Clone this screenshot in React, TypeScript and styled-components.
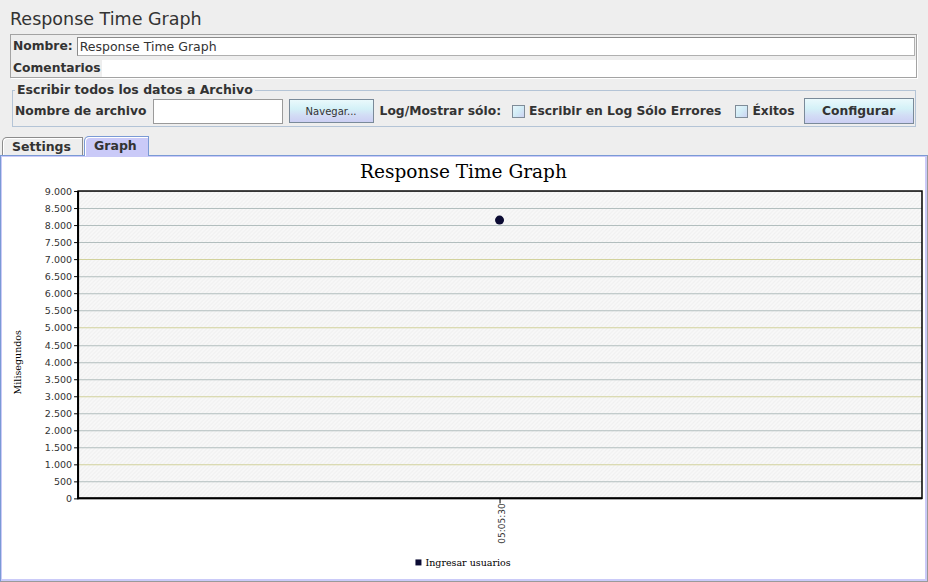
import React from "react";
import styled, { createGlobalStyle } from "styled-components";

const GlobalStyle = createGlobalStyle`
  html, body {
    margin: 0;
    padding: 0;
    background: #eeeeee;
    font-family: "DejaVu Sans", "Liberation Sans", sans-serif;
    color: #333333;
  }
`;

const Page = styled.div`
  width: 928px;
  height: 582px;
  display: flex;
  flex-direction: column;
  box-sizing: border-box;
  overflow: hidden;
`;

const Title = styled.div`
  font-size: 17.5px;
  line-height: 20px;
  padding: 9px 0 0 10px;
  color: #333333;
`;

const NamePanel = styled.div`
  margin: 5px 11px 0 10px;
  border: 1px solid #a3a3a3;
  box-shadow: 1px 1px 0 #ffffff;
  padding: 1px 0 0 1px;
`;

const NameRow = styled.div`
  display: flex;
  height: 19px;
  margin-top: 1px;
  padding-right: 1px;
`;

const BoldLabel = styled.span<{ $lh?: number }>`
  flex-shrink: 0;
  font-size: 12.3px;
  font-weight: bold;
  line-height: ${(p) => p.$lh ?? 14}px;
  white-space: nowrap;
  color: #333333;
`;

const NameLabel = styled(BoldLabel)`
  padding-left: 1px;
  margin-right: 4px;
`;

const NameInput = styled.input`
  flex: 1;
  height: 19px;
  box-sizing: border-box;
  border: 1px solid #8a8a8a;
  border-right-color: #b0b0b0;
  border-bottom-color: #b0b0b0;
  padding: 0 2px;
  margin: 0;
  font-family: "DejaVu Sans", sans-serif;
  font-size: 12.5px;
  color: #333333;
  background: #ffffff;
  outline: none;
`;

const CommentRow = styled.div`
  display: flex;
  height: 17px;
  margin-top: 4px;
`;

const CommentLabel = styled(BoldLabel)`
  padding-left: 1px;
  min-width: 89px;
`;

const CommentArea = styled.div`
  flex: 1;
  background: #ffffff;
`;

const FileBox = styled.fieldset`
  margin: 5px 12px 0 12px;
  border: 1px solid #b4c4d6;
  padding: 0 2px 2px 2px;
  min-width: 0;
`;

const FileLegend = styled.legend`
  padding: 0 2px;
  font-size: 12.5px;
  font-weight: bold;
  line-height: 14px;
  color: #333333;
`;

const FileRow = styled.div`
  display: flex;
  align-items: center;
  gap: 6px;
  height: 26px;
  margin-top: 1px;
`;

const FileInput = styled.input`
  flex-shrink: 0;
  width: 130px;
  height: 25px;
  box-sizing: border-box;
  border: 1px solid #9a9a9a;
  background: #ffffff;
  margin: 0;
  padding: 0 2px;
  outline: none;
`;

const MetalButton = styled.button<{ $w: number; $h: number; $small?: boolean }>`
  flex-shrink: 0;
  width: ${(p) => p.$w}px;
  height: ${(p) => p.$h}px;
  box-sizing: border-box;
  margin: 0;
  padding: 0;
  border: 1px solid #7a8a99;
  background: linear-gradient(to bottom, #eaf9fc 0%, #d4f1f7 40%, #d2dcf5 70%, #cccff3 100%);
  font-family: "DejaVu Sans", sans-serif;
  font-size: ${(p) => (p.$small ? 10 : 12.3)}px;
  font-weight: ${(p) => (p.$small ? "normal" : "bold")};
  color: #333333;
`;

const PushRight = styled(MetalButton)`
  margin-left: auto;
`;

const CheckItem = styled.label`
  flex-shrink: 0;
  display: flex;
  align-items: center;
  gap: 4px;
  padding: 0 3px 0 5px;
`;

const CheckBox = styled.span`
  width: 13px;
  height: 13px;
  box-sizing: border-box;
  border: 1px solid #7f8c98;
  background: linear-gradient(135deg, #e6f6fb 0%, #d2ecf6 50%, #cdd2f2 100%);
`;

const TabBar = styled.div`
  display: flex;
  align-items: flex-end;
  height: 19px;
  margin-top: 9px;
  padding-left: 2px;
`;

const Tab = styled.div<{ $active?: boolean }>`
  position: relative;
  z-index: ${(p) => (p.$active ? 1 : 0)};
  height: ${(p) => (p.$active ? 20 : 18)}px;
  margin-bottom: ${(p) => (p.$active ? -1 : 0)}px;
  margin-right: 1px;
  box-sizing: border-box;
  padding: 0 11px 0 9px;
  border: 1px solid ${(p) => (p.$active ? "#7a9ad5" : "#8c8c8c")};
  border-bottom: none;
  border-top-left-radius: 5px;
  background: ${(p) => (p.$active ? "#cacaf8" : "#eeeeee")};
  box-shadow: inset 1px 1px 0 #ffffff;
  font-size: 12.5px;
  font-weight: bold;
  line-height: 18px;
  color: #333333;
`;

const TabPanel = styled.div`
  flex: 1;
  display: flex;
  border: 1px solid;
  border-color: #7a9ad5 #9a9a9a #9a9a9a #7a9ad5;
  padding: 1px 2px 2px 1px;
  background: #cacaf8;
`;

const ChartArea = styled.div`
  flex: 1;
  background: #ffffff;
  display: flex;
`;

const ChartSvg = styled.svg`
  display: block;
  width: 100%;
  height: 100%;
`;

const PLOT = { left: 76, right: 919, top: 34, bottom: 341 };
const MAX = 9000;
const yOf = (v: number) => PLOT.bottom - (v / MAX) * (PLOT.bottom - PLOT.top);
const fmt = (v: number) => v.toLocaleString("de-DE");

const ticks = Array.from({ length: 19 }, (_, i) => i * 500);

const ResponseChart: React.FC = () => {
  const px = 497;
  const py = yOf(8150);
  return (
    <ChartSvg viewBox="0 0 922 421" preserveAspectRatio="xMinYMin meet">
      <defs>
        <pattern id="hatch" width="4" height="4" patternUnits="userSpaceOnUse">
          <rect width="4" height="4" fill="#f8f8f8" />
          <path d="M-1 1 L1 -1 M0 4 L4 0 M3 5 L5 3" stroke="#f0f0f0" strokeWidth="1" />
        </pattern>
      </defs>

      <text
        x="461"
        y="21"
        textAnchor="middle"
        fontFamily="'DejaVu Serif', 'Liberation Serif', serif"
        fontSize="18.5"
        fill="#000"
      >
        Response Time Graph
      </text>

      <rect
        x={PLOT.left}
        y={PLOT.top}
        width={PLOT.right - PLOT.left}
        height={PLOT.bottom - PLOT.top}
        fill="url(#hatch)"
      />

      {ticks.map((v) => {
        const y = Math.round(yOf(v)) + 0.5;
        const odd = v % 2000 === 1000;
        return (
          <g key={v}>
            {v > 0 && v < MAX && (
              <line
                x1={PLOT.left}
                x2={PLOT.right}
                y1={y}
                y2={y}
                stroke={odd ? "#d2d29c" : "#b2bebe"}
                strokeWidth="1"
              />
            )}
            <line x1={72} x2={PLOT.left} y1={y} y2={y} stroke="#000" strokeWidth="1" />
            <text
              x="70"
              y={y + 3.5}
              textAnchor="end"
              fontFamily="'DejaVu Sans', sans-serif"
              fontSize="9.5"
              fill="#333"
            >
              {fmt(v)}
            </text>
          </g>
        );
      })}

      <rect
        x={PLOT.left}
        y={PLOT.top}
        width={PLOT.right - PLOT.left}
        height={PLOT.bottom - PLOT.top}
        fill="none"
        stroke="#000"
        strokeWidth="1.5"
      />
      <line x1={PLOT.left} x2={PLOT.left} y1={PLOT.top} y2={PLOT.bottom + 1} stroke="#000" strokeWidth="2" />
      <line x1={PLOT.left} x2={PLOT.right} y1={PLOT.bottom} y2={PLOT.bottom} stroke="#000" strokeWidth="2" />

      <circle cx={px} cy={py} r="4.5" fill="#0b0b33" />

      <line x1={px + 0.5} x2={px + 0.5} y1={PLOT.bottom} y2={PLOT.bottom + 5} stroke="#000" strokeWidth="1" />
      <text
        transform={`translate(${px + 5}, 346) rotate(-90)`}
        textAnchor="end"
        fontFamily="'DejaVu Sans', sans-serif"
        fontSize="9"
        fill="#333"
      >
        05:05:30
      </text>

      <text
        transform="translate(19, 205) rotate(-90)"
        textAnchor="middle"
        fontFamily="'DejaVu Serif', 'Liberation Serif', serif"
        fontSize="9.5"
        fill="#000"
      >
        Milisegundos
      </text>

      <rect x="413" y="402" width="6" height="6" fill="#0b0b33" />
      <text
        x="423"
        y="409"
        fontFamily="'DejaVu Serif', 'Liberation Serif', serif"
        fontSize="9.5"
        fill="#000"
      >
        Ingresar usuarios
      </text>
    </ChartSvg>
  );
};

const App: React.FC = () => {
  return (
    <Page>
      <GlobalStyle />
      <Title>Response Time Graph</Title>

      <NamePanel>
        <NameRow>
          <NameLabel $lh={19}>Nombre:</NameLabel>
          <NameInput readOnly value="Response Time Graph" />
        </NameRow>
        <CommentRow>
          <CommentLabel $lh={17}>Comentarios</CommentLabel>
          <CommentArea />
        </CommentRow>
      </NamePanel>

      <FileBox>
        <FileLegend>Escribir todos los datos a Archivo</FileLegend>
        <FileRow>
          <BoldLabel>Nombre de archivo</BoldLabel>
          <FileInput readOnly value="" />
          <MetalButton $w={85} $h={24} $small>
            Navegar...
          </MetalButton>
          <BoldLabel>Log/Mostrar sólo:</BoldLabel>
          <CheckItem>
            <CheckBox />
            <BoldLabel>Escribir en Log Sólo Errores</BoldLabel>
          </CheckItem>
          <CheckItem>
            <CheckBox />
            <BoldLabel>Éxitos</BoldLabel>
          </CheckItem>
          <PushRight $w={110} $h={26}>
            Configurar
          </PushRight>
        </FileRow>
      </FileBox>

      <TabBar>
        <Tab>Settings</Tab>
        <Tab $active>Graph</Tab>
      </TabBar>

      <TabPanel>
        <ChartArea>
          <ResponseChart />
        </ChartArea>
      </TabPanel>
    </Page>
  );
};

export default App;
